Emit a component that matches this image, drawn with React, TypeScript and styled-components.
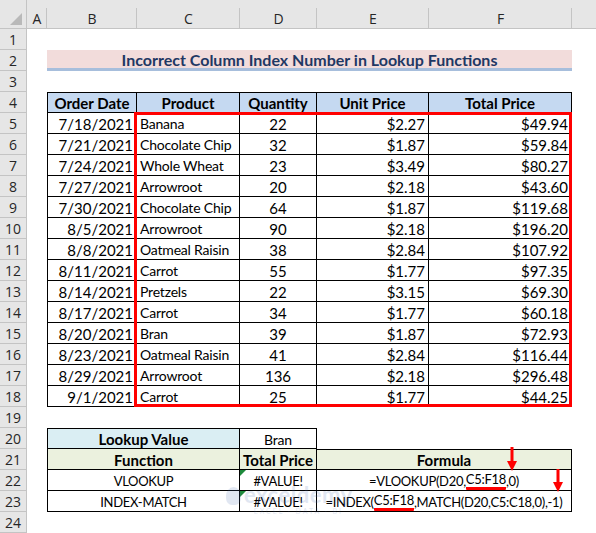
import React from 'react';
import styled, { createGlobalStyle, css } from 'styled-components';

const GlobalStyle = createGlobalStyle`
  html, body { margin: 0; padding: 0; background: #ffffff; }
  body { width: 596px; height: 533px; overflow: hidden; font-family: Lato, "Liberation Sans", sans-serif; }
`;

const HEADER_BG = '#e6e6e6';
const HEADER_LINE = '#c4c4c4';

const Sheet = styled.div`
  position: relative;
  display: grid;
  grid-template-columns: 27px 20px 90px 103px 77px 112px 143px 64px;
  grid-template-rows: 29px repeat(24, 21px);
  width: 596px;
  height: 533px;
  overflow: hidden;
  background: #ffffff;
`;

const Corner = styled.div`
  grid-column: 1;
  grid-row: 1;
  position: relative;
  background: ${HEADER_BG};
  border-right: 1px solid ${HEADER_LINE};
  border-bottom: 1px solid ${HEADER_LINE};
  &::after {
    content: '';
    position: absolute;
    right: 4px;
    bottom: 3px;
    width: 0;
    height: 0;
    border-left: 12px solid transparent;
    border-bottom: 12px solid #b9b9b9;
  }
`;

const ColHeader = styled.div<{ $col: number }>`
  grid-column: ${(p) => p.$col};
  grid-row: 1;
  display: flex;
  align-items: center;
  justify-content: center;
  padding-top: 8px;
  background-color: ${HEADER_BG};
  background-image: linear-gradient(${HEADER_LINE}, ${HEADER_LINE});
  background-size: 1px calc(100% - 8px);
  background-position: right bottom;
  background-repeat: no-repeat;
  border-bottom: 1px solid ${HEADER_LINE};
  font-family: "Open Sans", "Noto Sans", sans-serif;
  font-size: 14px;
  color: #262626;
`;

const RowHeader = styled.div<{ $row: number }>`
  grid-column: 1;
  grid-row: ${(p) => p.$row};
  display: flex;
  align-items: center;
  justify-content: center;
  background: ${HEADER_BG};
  border-right: 1px solid ${HEADER_LINE};
  border-bottom: 1px solid ${HEADER_LINE};
  font-family: "Open Sans", "Noto Sans", sans-serif;
  font-size: 14px;
  color: #262626;
`;

const TitleCell = styled.div`
  grid-column: 3 / 8;
  grid-row: 3;
  display: flex;
  align-items: center;
  justify-content: center;
  padding-top: 1px;
  background: #f2dcdb;
  border-bottom: 3px solid #a7bedc;
  font-size: 16px;
  font-weight: 700;
  color: #1f3864;
`;

type Align = 'left' | 'center' | 'right';

const Cell = styled.div<{
  $col: number;
  $row: number;
  $span?: number;
  $align?: Align;
  $top?: boolean;
  $left?: boolean;
}>`
  grid-column: ${(p) => p.$col} / span ${(p) => p.$span ?? 1};
  grid-row: ${(p) => p.$row};
  position: relative;
  display: flex;
  align-items: center;
  justify-content: ${(p) =>
    p.$align === 'left' ? 'flex-start' : p.$align === 'right' ? 'flex-end' : 'center'};
  padding: 1px 3px 0;
  min-width: 0;
  white-space: nowrap;
  border-right: 1px solid #000;
  border-bottom: 1px solid #000;
  ${(p) => p.$top && css`border-top: 1px solid #000;`}
  ${(p) => p.$left && css`border-left: 1px solid #000;`}
  font-size: 15px;
  color: #000;
`;

const TextCell = styled(Cell)`
  font-size: 14px;
  letter-spacing: -0.2px;
`;

const CapsCell = styled(Cell)`
  font-size: 13px;
  letter-spacing: -0.3px;
`;

const HeadCell = styled(Cell)`
  background: #c5d9f1;
  font-weight: 700;
`;

const LookupLabel = styled(Cell)`
  background: #daeef3;
  font-weight: 700;
`;

const FunctionHead = styled(Cell)`
  background: #ebf1de;
  font-weight: 700;
`;

const ErrorCell = styled(CapsCell)`
  &::before {
    content: '';
    position: absolute;
    left: 0;
    top: 0;
    width: 0;
    height: 0;
    border-top: 6px solid #1e8a3c;
    border-right: 6px solid transparent;
  }
`;

const Marked = styled.span`
  border-bottom: 3px solid #ff0000;
  border-radius: 1px;
`;

const Highlight = styled.div`
  position: absolute;
  left: 134px;
  top: 112px;
  width: 438px;
  height: 295px;
  box-sizing: border-box;
  border: 3px solid #ff0000;
  pointer-events: none;
`;

const Arrow = styled.svg<{ $x: number; $y: number }>`
  position: absolute;
  left: ${(p) => p.$x}px;
  top: ${(p) => p.$y}px;
  width: 12px;
  overflow: visible;
`;

const Watermark = styled.div`
  position: absolute;
  left: 226px;
  top: 484px;
  display: flex;
  align-items: flex-start;
  gap: 3px;
  opacity: 0.16;
  pointer-events: none;
  color: #4a6fb5;
`;

const WatermarkLogo = styled.div`
  width: 15px;
  height: 18px;
  margin-top: 3px;
  border-radius: 50% 50% 40% 40%;
  background: #4a6fb5;
`;

const WatermarkText = styled.div`
  display: flex;
  flex-direction: column;
  align-items: center;
  line-height: 1;
`;

const WatermarkName = styled.span`
  font-size: 22px;
  font-weight: 700;
  letter-spacing: 0.5px;
`;

const WatermarkTag = styled.span`
  font-size: 7px;
  letter-spacing: 2px;
  margin-top: 2px;
`;

const DownArrow: React.FC<{ x: number; y: number; len: number }> = ({ x, y, len }) => (
  <Arrow $x={x - 6} $y={y} viewBox={`0 0 12 ${len}`} height={len}>
    <rect x={4.5} y={0} width={3} height={len - 9} fill="#ff0000" />
    <polygon points={`1,${len - 10} 11,${len - 10} 6,${len}`} fill="#ff0000" />
  </Arrow>
);

// G is only partly visible; its letter lies beyond the window edge
const COLUMNS = ['A', 'B', 'C', 'D', 'E', 'F', ''];

const ROWS: [string, string, number, string, string][] = [
  ['7/18/2021', 'Banana', 22, '$2.27', '$49.94'],
  ['7/21/2021', 'Chocolate Chip', 32, '$1.87', '$59.84'],
  ['7/24/2021', 'Whole Wheat', 23, '$3.49', '$80.27'],
  ['7/27/2021', 'Arrowroot', 20, '$2.18', '$43.60'],
  ['7/30/2021', 'Chocolate Chip', 64, '$1.87', '$119.68'],
  ['8/5/2021', 'Arrowroot', 90, '$2.18', '$196.20'],
  ['8/8/2021', 'Oatmeal Raisin', 38, '$2.84', '$107.92'],
  ['8/11/2021', 'Carrot', 55, '$1.77', '$97.35'],
  ['8/14/2021', 'Pretzels', 22, '$3.15', '$69.30'],
  ['8/17/2021', 'Carrot', 34, '$1.77', '$60.18'],
  ['8/20/2021', 'Bran', 39, '$1.87', '$72.93'],
  ['8/23/2021', 'Oatmeal Raisin', 41, '$2.84', '$116.44'],
  ['8/29/2021', 'Arrowroot', 136, '$2.18', '$296.48'],
  ['9/1/2021', 'Carrot', 25, '$1.77', '$44.25'],
];

// grid row for sheet row n
const gr = (n: number) => n + 1;

export default function App() {
  return (
    <>
      <GlobalStyle />
      <Sheet>
        <Corner />
        {COLUMNS.map((c, i) => (
          <ColHeader key={i} $col={i + 2}>
            {c}
          </ColHeader>
        ))}
        {Array.from({ length: 24 }, (_, i) => (
          <RowHeader key={i} $row={gr(i + 1)}>
            {i + 1}
          </RowHeader>
        ))}

        <TitleCell>Incorrect Column Index Number in Lookup Functions</TitleCell>

        <HeadCell $col={3} $row={gr(4)} $top $left>Order Date</HeadCell>
        <HeadCell $col={4} $row={gr(4)} $top>Product</HeadCell>
        <HeadCell $col={5} $row={gr(4)} $top>Quantity</HeadCell>
        <HeadCell $col={6} $row={gr(4)} $top>Unit Price</HeadCell>
        <HeadCell $col={7} $row={gr(4)} $top>Total Price</HeadCell>

        {ROWS.map((r, i) => {
          const row = gr(5 + i);
          return (
            <React.Fragment key={i}>
              <Cell $col={3} $row={row} $left $align="right">{r[0]}</Cell>
              <TextCell $col={4} $row={row} $align="left">{r[1]}</TextCell>
              <Cell $col={5} $row={row}>{r[2]}</Cell>
              <Cell $col={6} $row={row} $align="right">{r[3]}</Cell>
              <Cell $col={7} $row={row} $align="right">{r[4]}</Cell>
            </React.Fragment>
          );
        })}

        <LookupLabel $col={3} $span={2} $row={gr(20)} $top $left>Lookup Value</LookupLabel>
        <TextCell $col={5} $row={gr(20)} $top>Bran</TextCell>

        <FunctionHead $col={3} $span={2} $row={gr(21)} $left>Function</FunctionHead>
        <FunctionHead $col={5} $row={gr(21)}>Total Price</FunctionHead>
        <FunctionHead $col={6} $span={2} $row={gr(21)} $top>Formula</FunctionHead>

        <CapsCell $col={3} $span={2} $row={gr(22)} $left>VLOOKUP</CapsCell>
        <ErrorCell $col={5} $row={gr(22)}>#VALUE!</ErrorCell>
        <CapsCell $col={6} $span={2} $row={gr(22)}>
          =VLOOKUP(D20,<Marked>C5:F18</Marked>,0)
        </CapsCell>

        <CapsCell $col={3} $span={2} $row={gr(23)} $left>INDEX-MATCH</CapsCell>
        <ErrorCell $col={5} $row={gr(23)}>#VALUE!</ErrorCell>
        <CapsCell $col={6} $span={2} $row={gr(23)}>
          =INDEX(<Marked>C5:F18</Marked>,MATCH(D20,C5:C18,0),-1)
        </CapsCell>

        <Highlight />
        <DownArrow x={512} y={447} len={24} />
        <DownArrow x={558} y={469} len={23} />

        <Watermark>
          <WatermarkLogo />
          <WatermarkText>
            <WatermarkName>exceldemy</WatermarkName>
            <WatermarkTag>EXCEL · DATA · BI</WatermarkTag>
          </WatermarkText>
        </Watermark>
      </Sheet>
    </>
  );
}
